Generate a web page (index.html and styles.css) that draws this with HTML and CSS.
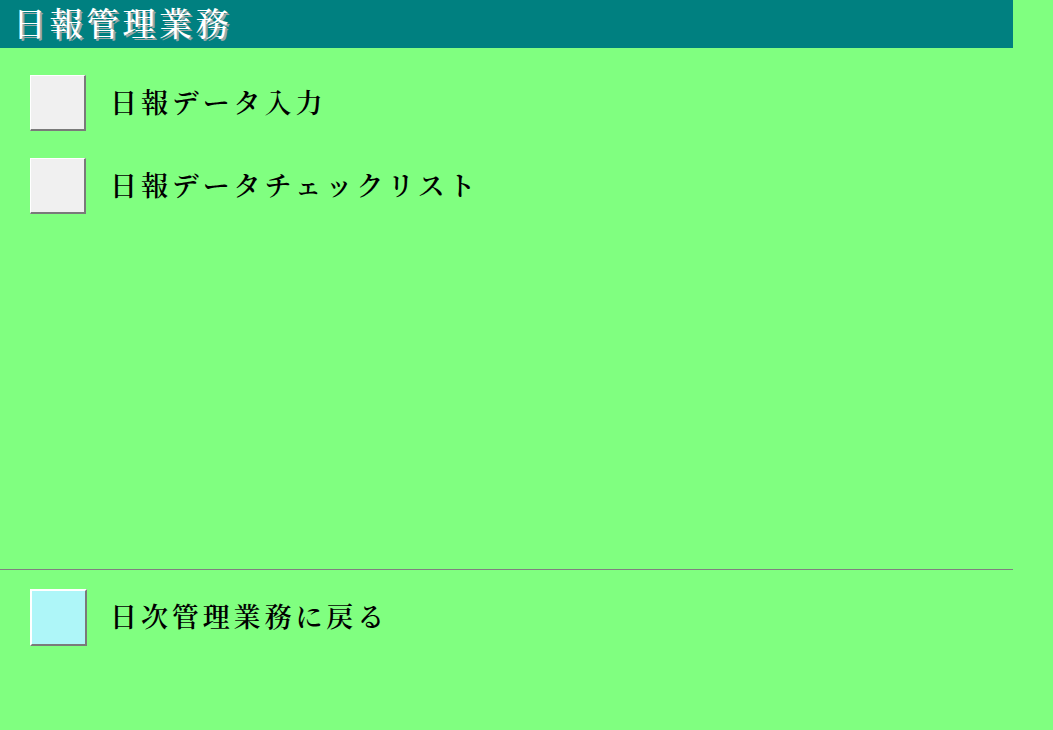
FILE: index.html
```html
<!DOCTYPE html>
<html lang="ja">
<head>
<meta charset="utf-8">
<title>日報管理業務</title>
<link rel="stylesheet" href="styles.css">
</head>
<body>
<div class="page">
  <header class="header"><h1 class="title">日報管理業務</h1></header>
  <main class="menu">
    <div class="item"><button class="btn"></button><span class="label">日報データ入力</span></div>
    <div class="item"><button class="btn"></button><span class="label">日報データチェックリスト</span></div>
  </main>
  <footer class="footer">
    <div class="item"><button class="btn btn-back"></button><span class="label">日次管理業務に戻る</span></div>
  </footer>
</div>
</body>
</html>
```
FILE: styles.css
```css
html, body {
  margin: 0;
  padding: 0;
  background: #80ff80;
  width: 1053px;
  height: 730px;
  overflow: hidden;
}
.page {
  width: 1013px;
  font-family: "Noto Serif CJK JP", "Noto Sans CJK JP", serif;
}
.header {
  background: #008080;
  height: 48px;
  display: flex;
  align-items: center;
  padding-left: 13px;
}
.title {
  margin: 0;
  color: #ffffff;
  font-size: 33px;
  font-weight: 500;
  letter-spacing: 3.5px;
  line-height: 1;
  margin-top: -5px;
  text-shadow: 2px 2px 0 #9aa8a8;
}
.menu {
  box-sizing: border-box;
  height: 522px;
  padding-top: 27px;
  padding-left: 30px;
  display: flex;
  flex-direction: column;
  gap: 27px;
  border-bottom: 1px solid #808080;
}
.footer {
  padding-top: 19px;
  padding-left: 30px;
}
.item {
  display: flex;
  align-items: center;
  height: 56px;
}
.btn {
  width: 56px;
  height: 56px;
  box-sizing: border-box;
  margin: 0;
  padding: 0;
  background: #f0f0f0;
  border-top: 1px solid #ffffff;
  border-left: 1px solid #ffffff;
  border-right: 2px solid #7a7a7a;
  border-bottom: 2px solid #7a7a7a;
}
.btn-back {
  width: 57px;
  height: 57px;
  background: #aef6f8;
  border-top: 2px solid #ffffff;
  border-left: 2px solid #ffffff;
}
.label {
  margin-left: 24px;
  margin-top: -4px;
  font-size: 27px;
  font-weight: 600;
  letter-spacing: 3.9px;
  color: #000000;
  line-height: 1;
}
.footer .label {
  margin-left: 23px;
}
```
